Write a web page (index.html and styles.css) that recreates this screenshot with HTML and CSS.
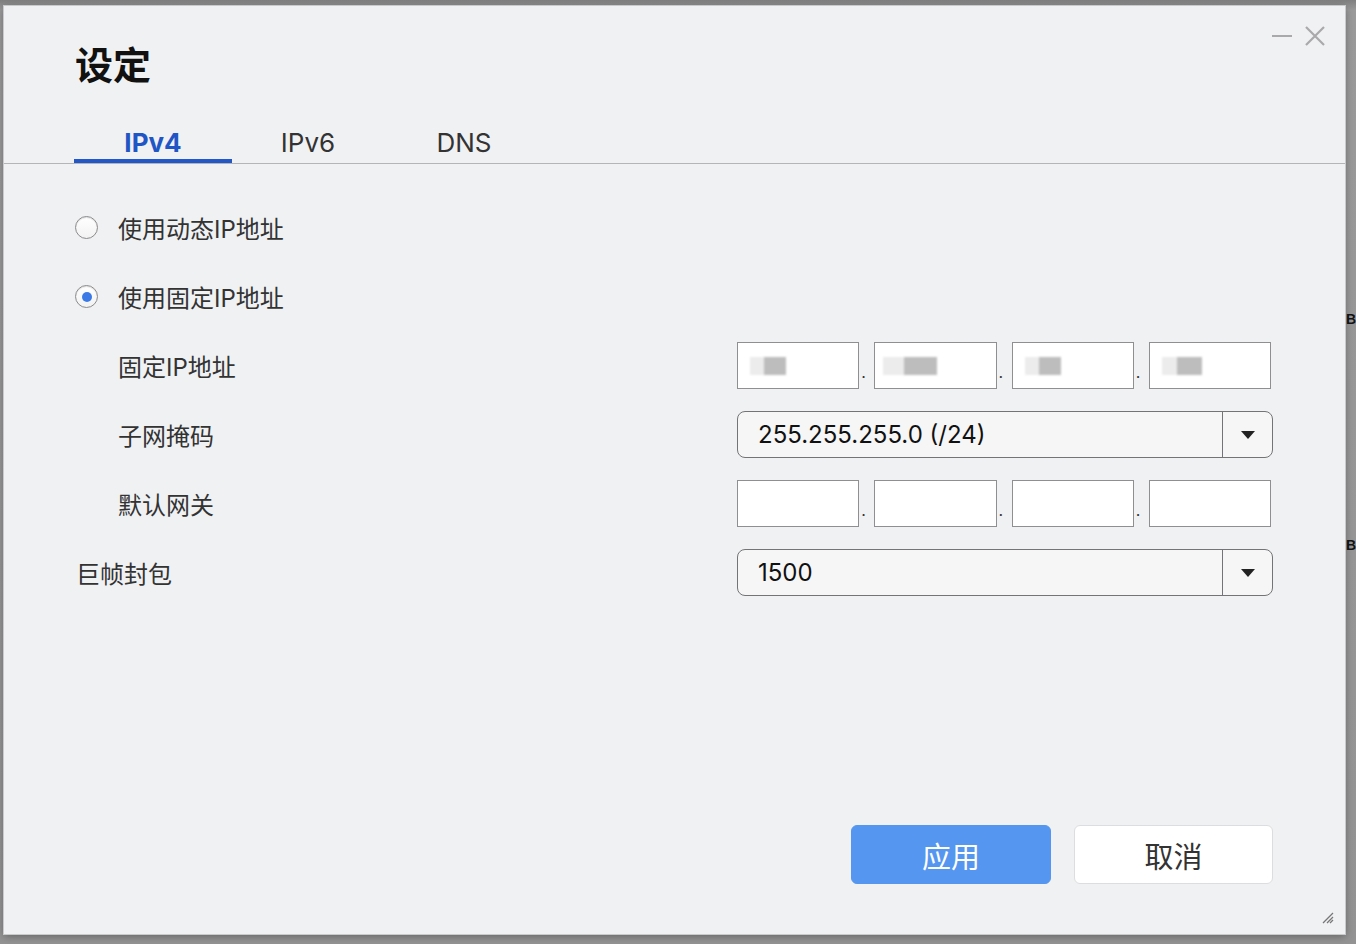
FILE: index.html
```html
<!DOCTYPE html>
<html lang="zh-CN">
<head>
  <meta charset="UTF-8" />
  <title>设定</title>
  <link rel="stylesheet" href="styles.css">
</head>
<body>

  <div class="dialog">
    <div class="window-controls">
      <span class="win-min"></span>
      <svg class="win-close" width="22" height="22" viewBox="0 0 22 22">
        <path d="M2 2 L20 20 M20 2 L2 20" stroke="#a9a9ab" stroke-width="2.2" fill="none" />
      </svg>
    </div>

    <h2 class="title">设定</h2>

    <div class="tabs">
      <div class="tab active">IPv4</div>
      <div class="tab">IPv6</div>
      <div class="tab">DNS</div>
    </div>

    <form class="form">
      <label class="radio-row">
        <span class="radio"></span>
        <span>使用动态IP地址</span>
      </label>
      <div></div>

      <label class="radio-row">
        <span class="radio checked"></span>
        <span>使用固定IP地址</span>
      </label>
      <div></div>

      <div class="label sub">固定IP地址</div>
      <div class="ip-group">
        <div class="ip-input"><span class="blur" style="width:36px"></span></div>
        <span class="dot">.</span>
        <div class="ip-input"><span class="blur" style="width:54px;margin-left:-4px"></span></div>
        <span class="dot">.</span>
        <div class="ip-input"><span class="blur" style="width:36px"></span></div>
        <span class="dot">.</span>
        <div class="ip-input"><span class="blur" style="width:40px"></span></div>
      </div>

      <div class="label sub">子网掩码</div>
      <div class="select">
        <span class="select-value">255.255.255.0 (/24)</span>
        <span class="select-arrow"></span>
      </div>

      <div class="label sub">默认网关</div>
      <div class="ip-group">
        <div class="ip-input"></div>
        <span class="dot">.</span>
        <div class="ip-input"></div>
        <span class="dot">.</span>
        <div class="ip-input"></div>
        <span class="dot">.</span>
        <div class="ip-input"></div>
      </div>

      <div class="label">巨帧封包</div>
      <div class="select">
        <span class="select-value">1500</span>
        <span class="select-arrow"></span>
      </div>
    </form>

    <div class="footer">
      <button type="button" class="btn primary">应用</button>
      <button type="button" class="btn">取消</button>
    </div>

    <svg class="grip" width="14" height="14" viewBox="0 0 14 14">
      <path d="M13 3 L3 13 M13 7 L7 13 M13 10 L10 13" stroke="#777" stroke-width="1.3" fill="none" />
    </svg>
  </div>

  <div class="backdrop-edge">
    <span class="edge-b first">B</span>
    <span class="edge-b">B</span>
  </div>

</body>
</html>
```

FILE: styles.css
```css
body {
  font-family: Inter, 'Noto Sans CJK SC', sans-serif;
  background: linear-gradient(#7f7f80, #9a9a9b 10px, #939394);
  margin: 0;
  padding: 0;
  display: flex;
  height: 944px;
  overflow: hidden;
}
.dialog {
  position: relative;
  margin: 6px 0 0 4px;
  width: 1341px;
  height: 928px;
  background-color: #f0f1f3;
  box-shadow: 0 0 0 1px #c9cacc, 0 2px 8px rgba(0, 0, 0, 0.35);
  display: flex;
  flex-direction: column;
  color: #333;
}
.window-controls {
  position: absolute;
  top: 19px;
  right: 19px;
  display: flex;
  align-items: center;
  gap: 12px;
}
.win-min {
  width: 20px;
  height: 2px;
  background: #a9a9ab;
}
.title {
  margin: 36px 0 0 71px;
  font-size: 38px;
  line-height: 46px;
  font-weight: 700;
  color: #111;
}
.tabs {
  display: flex;
  margin-top: 38px;
  padding-left: 70px;
  border-bottom: 1px solid #b4b5b7;
}
.tab {
  width: 156px;
  text-align: center;
  font-size: 26px;
  line-height: 33px;
  color: #333;
  border-bottom: 4px solid transparent;
}
.tab.active {
  width: 158px;
  margin-right: -2px;
  color: #1f55c4;
  font-weight: 700;
  border-bottom-color: #2356c6;
}
.form {
  display: grid;
  grid-template-columns: 1fr 536px;
  grid-template-rows: 47px 47px 47px 47px 47px 47px;
  row-gap: 22px;
  padding: 40px 72px 0 72px;
  align-items: center;
  font-size: 24px;
}
.radio-row {
  display: flex;
  align-items: center;
  gap: 20px;
  margin-left: -1px;
}
.radio {
  width: 21px;
  height: 21px;
  border-radius: 50%;
  border: 1px solid #8b8b8d;
  background: linear-gradient(#ffffff, #f2f2f2);
  box-shadow: inset 0 1px 1px rgba(0, 0, 0, 0.12);
  display: flex;
  align-items: center;
  justify-content: center;
}
.radio.checked::after {
  content: '';
  width: 10px;
  height: 10px;
  border-radius: 50%;
  background: #3b7ae6;
}
.label.sub {
  padding-left: 42px;
}
.ip-group {
  display: grid;
  grid-template-columns: 1fr 15px 1fr 15px 1fr 15px 1fr;
  width: 534px;
  height: 47px;
}
.ip-input {
  background: white;
  border: 1.5px solid #8f8f91;
  display: flex;
  align-items: center;
  padding-left: 12px;
}
.blur {
  height: 18px;
  background: linear-gradient(90deg, #ececec 0 38%, #bdbdbd 38% 100%);
  filter: blur(1px);
}
.dot {
  font-size: 16px;
  color: #333;
  padding-left: 2px;
  align-self: end;
  line-height: 14px;
  padding-bottom: 10px;
}
.select {
  height: 47px;
  border: 1.5px solid #747476;
  border-radius: 8px;
  background: #f6f6f7;
  display: flex;
  align-items: center;
  box-sizing: border-box;
}
.select-value {
  flex: 1;
  padding-left: 20px;
  font-size: 24px;
  color: #111;
}
.select-arrow {
  width: 49px;
  height: 100%;
  border-left: 1.5px solid #747476;
  display: flex;
  align-items: center;
  justify-content: center;
}
.select-arrow::after {
  content: '';
  border-left: 7px solid transparent;
  border-right: 7px solid transparent;
  border-top: 8px solid #222;
}
.footer {
  margin-top: auto;
  display: flex;
  justify-content: flex-end;
  gap: 23px;
  padding: 0 72px 50px 0;
}
.btn {
  width: 199px;
  height: 59px;
  border-radius: 6px;
  border: 1.5px solid #dcdde0;
  background: white;
  color: #333;
  font-family: Inter, 'Noto Sans CJK SC', sans-serif;
  font-size: 29px;
  cursor: pointer;
}
.btn.primary {
  width: 200px;
  background-color: #5596f0;
  border-color: #5596f0;
  color: white;
}
.grip {
  position: absolute;
  right: 11px;
  bottom: 10px;
}
.backdrop-edge {
  flex: 1;
  display: flex;
  flex-direction: column;
  overflow: hidden;
  padding-left: 1px;
}
.edge-b {
  font-family: 'Liberation Sans', sans-serif;
  font-weight: 700;
  font-size: 14px;
  line-height: 18px;
  color: #151515;
  margin-top: 208px;
}
.edge-b.first {
  margin-top: 310px;
}
```
